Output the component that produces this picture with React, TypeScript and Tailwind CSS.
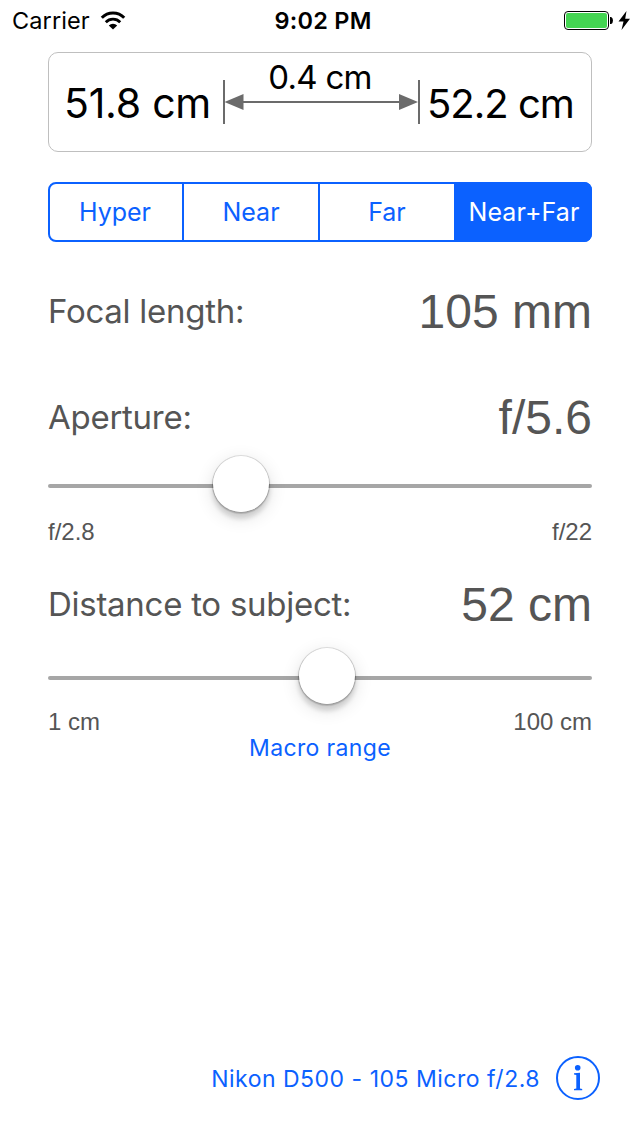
import React from 'react';

const inter = "font-['Inter',sans-serif]";
const arial = "font-['Liberation_Sans',sans-serif]";

function StatusBar() {
  return (
    <header className="flex h-10 items-center pt-[1px] text-black">
      <div className="flex flex-1 items-center pl-3">
        <span className="text-[23.5px] leading-6 tracking-[0.1px]">Carrier</span>
        <svg className="ml-[10px]" width="26" height="20" viewBox="0 0 26 20" fill="none" stroke="#000">
          <path d="M1.8 6.7A15.6 15.6 0 0 1 24.2 6.7" strokeWidth="3" />
          <path d="M5.8 11.2A10 10 0 0 1 20.2 11.2" strokeWidth="2.8" />
          <path d="M13 18.5L8.8 14.4A6 6 0 0 1 17.2 14.4Z" fill="#000" stroke="none" />
        </svg>
      </div>
      <span className="ml-[3px] text-[23.5px] font-semibold leading-6 tracking-[0.25px]">9:02 PM</span>
      <div className="flex flex-1 items-center justify-end pr-[9px]">
        <svg width="67" height="20" viewBox="0 0 67 20">
          <rect x="0.5" y="0.5" width="44" height="18" rx="3.5" fill="#fff" stroke="#000" />
          <rect x="2" y="2" width="41" height="15" rx="2" fill="#44d552" />
          <path d="M46 6H47.2Q49 7 49 9.5T47.2 13H46Z" />
          <path d="M62.5 0L54.5 10.5H59.5L57.5 19L66 7.8H61.2Z" />
        </svg>
      </div>
    </header>
  );
}

function RangeCard() {
  return (
    <section className="flex h-[100px] rounded-[10px] border border-[#bfbfbf] pl-[15px] pr-[16px] text-black">
      <span className="w-[159px] shrink-0 whitespace-nowrap text-[41px] leading-[100px] tracking-[-0.25px]">51.8 cm</span>
      <div className="flex w-[197px] shrink-0 flex-col items-center">
        <span className="mr-[3px] mt-[3px] whitespace-nowrap text-[33px] leading-[42px] tracking-[-0.7px]">0.4 cm</span>
        <svg className="-mt-[18px]" width="197" height="44" viewBox="0 0 197 44" fill="#6b6b6b">
          <rect width="2" height="44" />
          <rect x="195" width="2" height="44" />
          <rect x="18" y="21" width="160" height="2" />
          <path d="M1.5 22L20.5 14V30Z" />
          <path d="M195 22L176 14V30Z" />
        </svg>
      </div>
      <span className="ml-[7px] whitespace-nowrap text-[40px] leading-[101px] tracking-[-1px]">52.2 cm</span>
    </section>
  );
}

function ModePicker() {
  return (
    <nav className="mt-[30px] grid h-[60px] grid-cols-[134px_136px_136px_134px] divide-x-2 divide-[#0b61ff] rounded-lg border-2 border-[#0b61ff] text-[25px] leading-[56px] text-[#0b61ff]">
      <button className="pr-[2px]">Hyper</button>
      <button>Near</button>
      <button>Far</button>
      <button className="-my-[2px] -mr-[2px] rounded-r-lg bg-[#0b61ff] tracking-[0.1px] text-white">Near+Far</button>
    </nav>
  );
}

function Row({ label, value }: { label: string; value: string }) {
  return (
    <div className="flex h-[60px] items-center justify-between whitespace-nowrap">
      <span className="text-[33px] leading-10 tracking-[-0.27px]">{label}</span>
      <span className={`${arial} pt-[2px] text-[48px] leading-[56px]`}>{value}</span>
    </div>
  );
}

function Slider({ thumb }: { thumb: string }) {
  return (
    <div className="relative flex h-[58px] items-center pt-[4px]">
      <div className="h-1 w-full rounded-full bg-[#a6a6a6]" />
      <div
        className={`absolute top-0 size-[58px] rounded-full border border-black/10 bg-white bg-clip-padding shadow-[0_5px_18px_rgba(0,0,0,0.12),0_6px_4px_rgba(0,0,0,0.12),0_1px_1px_rgba(0,0,0,0.15)] ${thumb}`}
      />
    </div>
  );
}

function Limits({ min, max }: { min: string; max: string }) {
  return (
    <div className={`${arial} flex justify-between text-[24px] leading-7`}>
      <span>{min}</span>
      <span>{max}</span>
    </div>
  );
}

export default function App() {
  return (
    <div className={`${inter} flex h-[1136px] w-[640px] flex-col bg-white text-[#555]`}>
      <StatusBar />
      <main className="flex flex-1 flex-col px-12 pt-3">
        <RangeCard />
        <ModePicker />
        <div className="mt-[39px]">
          <Row label="Focal length:" value="105 mm" />
        </div>
        <div className="mt-[46px]">
          <Row label="Aperture:" value="f/5.6" />
        </div>
        <div className="mt-[8px]">
          <Slider thumb="left-[164px]" />
        </div>
        <div className="mt-[5px]">
          <Limits min="f/2.8" max="f/22" />
        </div>
        <div className="mt-[28px]">
          <Row label="Distance to subject:" value="52 cm" />
        </div>
        <div className="mt-[13px]">
          <Slider thumb="left-[250px]" />
        </div>
        <div className="mt-[3px]">
          <Limits min="1 cm" max="100 cm" />
        </div>
        <span className="-mt-[2px] text-center text-[23px] leading-7 tracking-[0.35px] text-[#0b61ff]">Macro range</span>
      </main>
      <footer className="mb-9 flex h-[44px] items-center justify-end gap-4 pr-10 text-[#0b61ff]">
        <span className="mt-[2px] text-[23px] leading-7 tracking-[0.5px]">Nikon D500 - 105 Micro f/2.8</span>
        <svg width="44" height="44" viewBox="0 0 44 44" fill="currentColor">
          <circle cx="22" cy="22" r="21" fill="none" stroke="currentColor" strokeWidth="2" />
          <circle cx="21.7" cy="11.7" r="2.8" />
          <path d="M18 17.2L24 16.7V32.5L26.2 33V34.3H18V33L20.3 32.5V19L18 18.5Z" />
        </svg>
      </footer>
    </div>
  );
}
